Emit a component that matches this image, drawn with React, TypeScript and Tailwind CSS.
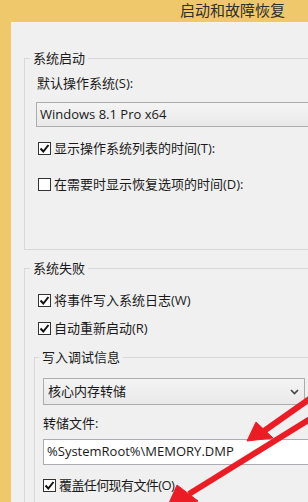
import React from "react";

const Check: React.FC<{ checked?: boolean }> = ({ checked }) => (
  <span className="flex h-[13px] w-[13px] shrink-0 items-center justify-center border border-[#333] bg-white">
    {checked && (
      <svg width="11" height="11" viewBox="0 0 11 11">
        <path d="M1.5 5.5 L4.3 8.5 L9.5 2" fill="none" stroke="#111" strokeWidth="2" />
      </svg>
    )}
  </span>
);

const CheckRow: React.FC<{ checked?: boolean; label: string; className?: string }> = ({
  checked,
  label,
  className,
}) => (
  <div className={`flex h-[18px] items-center gap-[3px] ${className ?? ""}`}>
    <Check checked={checked} />
    <span className="leading-[18px]">{label}</span>
  </div>
);

const Arrows: React.FC = () => (
  <svg className="pointer-events-none absolute inset-0" width="308" height="502" viewBox="0 0 308 502">
    <g fill="#ec1c24" stroke="#ec1c24" strokeLinecap="butt">
      <line x1="318" y1="393" x2="264" y2="431" strokeWidth="6" />
      <polygon points="247,441 256,422 273,438" strokeWidth="1" />
      <line x1="318" y1="414" x2="189" y2="494" strokeWidth="6" />
      <polygon points="166,510 177,485 198,501" strokeWidth="1" />
    </g>
  </svg>
);

const App: React.FC = () => {
  return (
    <div className="relative h-[502px] w-[308px] overflow-hidden bg-[#f0c86c] font-['Open_Sans','Noto_Sans_CJK_SC',sans-serif] text-[13px] text-[#1a1a1a]">
      <div className="h-[22px] pl-[180px] text-[15px] leading-[21px] text-[#2e2e2e]">
        启动和故障恢复
      </div>
      <div className="ml-[11px] h-[480px] border-l border-t border-[#f8f3e6] bg-[#f0f0f0] pl-[12px]">
        <fieldset className="mt-[26px] w-[300px] border border-[#d8d8d8] p-0">
          <legend className="ml-[5px] px-[3px] leading-[18px]">系统启动</legend>
          <div className="flex flex-col pl-[12px] pt-[7px] pb-[56px]">
            <div className="h-[18px] leading-[18px]">默认操作系统(S):</div>
            <div className="mt-[10px] ml-[-1px] flex h-[25px] w-[290px] items-center border border-[#acacac] bg-gradient-to-b from-[#f4f4f4] to-[#e9e9e9] pl-[3px]">
              Windows 8.1 Pro x64
            </div>
            <CheckRow checked label="显示操作系统列表的时间(T):" className="mt-[12px] pl-[1px]" />
            <CheckRow label="在需要时显示恢复选项的时间(D):" className="mt-[18px] pl-[1px]" />
          </div>
        </fieldset>

        <fieldset className="mt-[9px] w-[300px] border border-[#d8d8d8] p-0">
          <legend className="ml-[5px] px-[3px] leading-[18px]">系统失败</legend>
          <div className="flex flex-col pl-[12px] pt-[14px] pb-[20px]">
            <CheckRow checked label="将事件写入系统日志(W)" className="pl-[1px]" />
            <CheckRow checked label="自动重新启动(R)" className="mt-[10px] pl-[1px]" />
            <fieldset className="ml-[-3px] mt-[11px] w-[290px] border border-[#d8d8d8] p-0">
              <legend className="ml-[4px] px-[3px] leading-[18px]">写入调试信息</legend>
              <div className="flex flex-col pl-[8px] pt-[12px] pb-[20px]">
                <div className="flex h-[27px] w-[262px] items-center justify-between border border-[#acacac] bg-gradient-to-b from-[#f4f4f4] to-[#e9e9e9] pl-[4px] pr-[5px]">
                  <span>核心内存转储</span>
                  <svg width="9" height="6" viewBox="0 0 9 6">
                    <path d="M1 1 L4.5 4.5 L8 1" fill="none" stroke="#444" strokeWidth="1.6" />
                  </svg>
                </div>
                <div className="mt-[9px] h-[18px] leading-[18px]">转储文件:</div>
                <div className="mt-[7px] flex h-[26px] w-[280px] items-center border border-[#abadb3] bg-white pl-[3px]">
                  %SystemRoot%\MEMORY.DMP
                </div>
                <CheckRow checked label="覆盖任何现有文件(O)" className="mt-[11px] tracking-[-0.6px]" />
              </div>
            </fieldset>
          </div>
        </fieldset>
      </div>
      <Arrows />
    </div>
  );
};

export default App;
